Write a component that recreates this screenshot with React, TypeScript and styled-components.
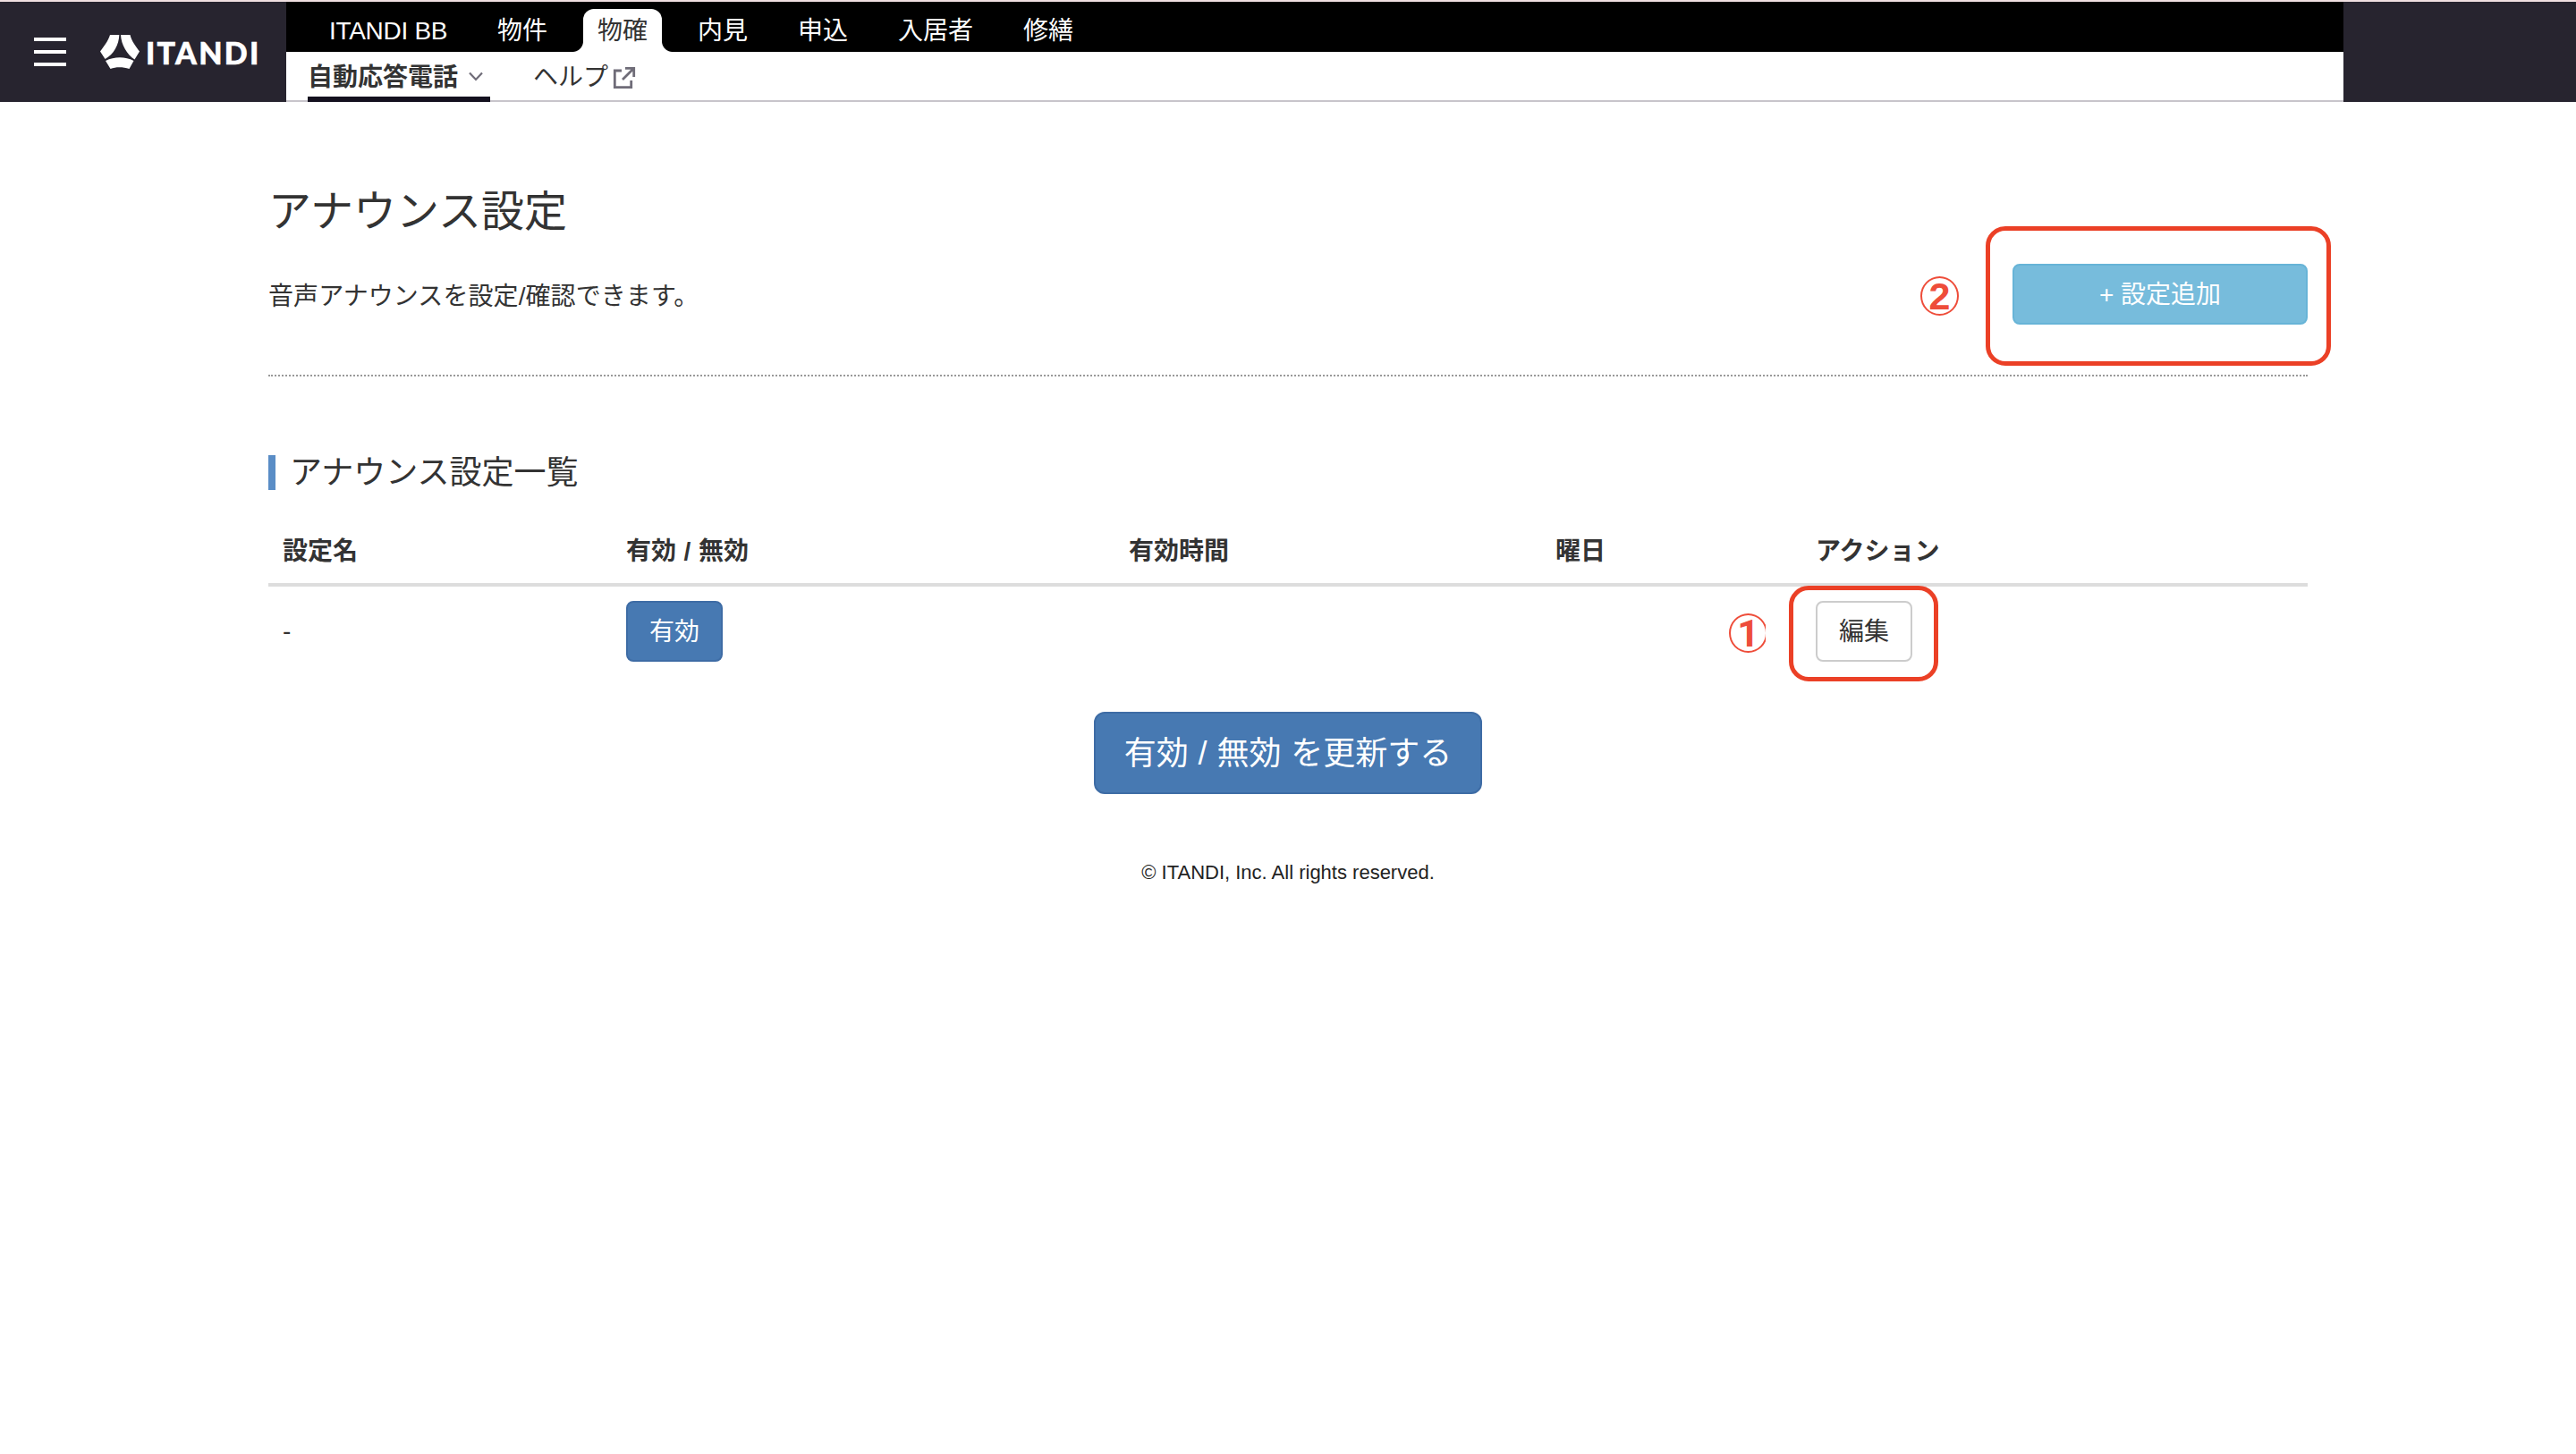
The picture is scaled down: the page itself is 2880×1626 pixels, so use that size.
import React from "react";
import styled, { createGlobalStyle } from "styled-components";

const fontStack = `"Liberation Sans", "Noto Sans CJK JP", sans-serif`;

const GlobalStyle = createGlobalStyle`
  *, *::before, *::after { box-sizing: border-box; }
  body {
    margin: 0;
    background: #fff;
    color: #333;
    font: 28px/40px ${fontStack};
  }
`;

const Page = styled.div`
  min-height: 1626px;
  border-top: 2px solid #f0dfe1;
`;

const Header = styled.header`
  display: flex;
  height: 112px;
  background: #27242f;
`;

const Brand = styled.div`
  display: flex;
  align-items: center;
  width: 320px;
  padding-left: 38px;
`;

const MenuButton = styled.button`
  display: flex;
  flex-direction: column;
  gap: 10px;
  width: 36px;
  margin: 0 38px 0 0;
  padding: 0;
  border: 0;
  background: none;
`;

const MenuBar = styled.span`
  height: 4px;
  background: #fff;
`;

const LogoMark = styled.svg`
  display: block;
  width: 44px;
  height: 38px;
`;

const LogoText = styled.span`
  margin: 1px 0 0 7px;
  color: #fff;
  font: 900 34px/40px Lato, sans-serif;
  letter-spacing: 2.3px;
  -webkit-text-stroke: 0.6px #fff;
`;

const Navigation = styled.div`
  display: flex;
  flex-direction: column;
  width: 2300px;
`;

const ProductNav = styled.nav`
  display: flex;
  align-items: flex-end;
  gap: 24px;
  height: 56px;
  padding-left: 32px;
  background: #000;
`;

const ProductTab = styled.a<{ $active?: boolean; $width: number }>`
  position: relative;
  width: ${(p) => p.$width}px;
  height: 48px;
  padding: 5px 0 0 16px;
  white-space: nowrap;
  border-radius: 12px 12px 0 0;
  color: ${(p) => (p.$active ? "#333" : "#fff")};
  background: ${(p) => (p.$active ? "#fff" : "transparent")};

  &::before,
  &::after {
    content: "";
    display: ${(p) => (p.$active ? "block" : "none")};
    position: absolute;
    bottom: 0;
    width: 12px;
    height: 12px;
  }
  &::before {
    left: -12px;
    background: radial-gradient(circle at 0 0, #000 11.5px, #fff 12.5px);
  }
  &::after {
    right: -12px;
    background: radial-gradient(circle at 100% 0, #000 11.5px, #fff 12.5px);
  }
`;

const LatinLabel = styled.span`
  letter-spacing: -0.3px;
`;

const SubNav = styled.nav`
  display: flex;
  gap: 48px;
  height: 56px;
  padding-left: 24px;
  background: #fff;
  box-shadow: inset 0 -2px 0 #c8c5cb;
`;

const SubNavItem = styled.a<{ $active?: boolean }>`
  display: flex;
  align-items: center;
  height: 56px;
  padding-top: 8px;
  padding-bottom: ${(p) => (p.$active ? 0 : 6)}px;
  font-weight: ${(p) => (p.$active ? 700 : 400)};
  border-bottom: ${(p) => (p.$active ? "6px solid #14111f" : "0")};
`;

const ChevronIcon = styled.svg`
  width: 16px;
  height: 12px;
  margin: 0 8px 2px 12px;
`;

const ExternalIcon = styled.svg`
  width: 26px;
  height: 26px;
  margin: 0 0 1px 5px;
`;

const Main = styled.main`
  width: 2280px;
  margin: 0 auto;
  padding-top: 90px;
`;

const PageTitle = styled.h1`
  margin: 0;
  font-size: 48px;
  font-weight: 400;
  line-height: 66px;
`;

const Intro = styled.section`
  display: flex;
  justify-content: space-between;
  align-items: center;
  height: 151px;
  padding-bottom: 31px;
  border-bottom: 2px dotted #999;
`;

const Lead = styled.p`
  margin: 0;
  padding-top: 5px;
  letter-spacing: 0.08px;
`;

const Button = styled.button<{ $kind: "info" | "primary" | "plain"; $width: number; $large?: boolean }>`
  display: flex;
  align-items: center;
  justify-content: center;
  width: ${(p) => p.$width}px;
  height: ${(p) => (p.$large ? 92 : 68)}px;
  padding: 1px 0 0;
  white-space: nowrap;
  font: ${(p) => (p.$large ? 36 : 28)}px/40px ${fontStack};
  word-spacing: ${(p) => (p.$large ? 0.8 : 0)}px;
  border-radius: ${(p) => (p.$large ? 12 : 8)}px;
  border: 2px solid
    ${(p) => ({ info: "#67b4d7", primary: "#3e6ca5", plain: "#ccc" })[p.$kind]};
  background: ${(p) => ({ info: "#77bcdc", primary: "#4779b2", plain: "#fff" })[p.$kind]};
  color: ${(p) => (p.$kind === "plain" ? "#333" : "#fff")};
`;

const Annotated = styled.div`
  position: relative;
`;

const Highlight = styled.span<{ $x: number; $y: number; $w: number; $h: number }>`
  position: absolute;
  left: ${(p) => p.$x}px;
  top: ${(p) => p.$y}px;
  width: ${(p) => p.$w}px;
  height: ${(p) => p.$h}px;
  border: 5px solid #eb4026;
  border-radius: 22px;
`;

const StepNumber = styled.span<{ $x: number; $y: number; $font: string; $cut?: number }>`
  position: absolute;
  left: ${(p) => p.$x}px;
  top: ${(p) => p.$y}px;
  display: flex;
  align-items: center;
  justify-content: center;
  width: 43px;
  height: 44px;
  border: 2px solid #ee4d3a;
  border-radius: 50%;
  clip-path: inset(0 ${(p) => p.$cut ?? 0}px 0 0);
  color: #ee4d3a;
  font: 700 43px/44px ${(p) => p.$font}, sans-serif;
`;

const SectionTitle = styled.h2`
  margin: 88px 0 0;
  padding-left: 16px;
  border-left: 8px solid #5a8dc6;
  font-size: 36px;
  font-weight: 400;
  line-height: 39px;
`;

const Table = styled.table`
  width: 2280px;
  margin-top: 28px;
  table-layout: fixed;
  border-collapse: separate;
  border-spacing: 0;
`;

const HeadCell = styled.th<{ $width: number }>`
  width: ${(p) => p.$width}px;
  height: 80px;
  padding: 5px 16px 0;
  text-align: left;
  word-spacing: 0.8px;
  border-bottom: 4px solid #ddd;
`;

const Cell = styled.td`
  height: 100px;
  padding: 16px;
  vertical-align: middle;
`;

const SubmitRow = styled.div`
  display: flex;
  justify-content: center;
  margin-top: 40px;
`;

const Footer = styled.footer`
  margin-top: 68px;
  color: #222;
  font-size: 22px;
  line-height: 40px;
  text-align: center;
`;

const products = [
  { label: <LatinLabel>ITANDI BB</LatinLabel>, width: 164 },
  { label: "物件", width: 88 },
  { label: "物確", width: 88, active: true },
  { label: "内見", width: 88 },
  { label: "申込", width: 88 },
  { label: "入居者", width: 116 },
  { label: "修繕", width: 88 },
];

const columns = [
  { label: "設定名", width: 384 },
  { label: "有効 / 無効", width: 562 },
  { label: "有効時間", width: 477 },
  { label: "曜日", width: 291 },
  { label: "アクション", width: 566 },
];

export default function App() {
  return (
    <Page>
      <GlobalStyle />
      <Header>
        <Brand>
          <MenuButton aria-label="メニュー">
            <MenuBar />
            <MenuBar />
            <MenuBar />
          </MenuButton>
          <LogoMark viewBox="0 0 44 38" fill="#fff">
            <path d="M11 0H21.300C21 11 15 22 5.500 27L0 18.500C4 13 9 7 11 0Z" />
            <path d="M23 0H33.500C35 7 40 13 44 18.500L38.500 27.500C30 22 23.500 11 23 0Z" />
            <path d="M6 29C16 24 28 24 37.500 29L32.500 38C26 36 18 35.500 11.500 38Z" />
          </LogoMark>
          <LogoText>ITANDI</LogoText>
        </Brand>
        <Navigation>
          <ProductNav>
            {products.map((p, i) => (
              <ProductTab key={i} $width={p.width} $active={p.active}>
                {p.label}
              </ProductTab>
            ))}
          </ProductNav>
          <SubNav>
            <SubNavItem $active>
              自動応答電話
              <ChevronIcon viewBox="0 0 16 12" fill="none" stroke="#6f6c78" strokeWidth="2.2">
                <path d="M1 1.500L8 9L15 1.500" />
              </ChevronIcon>
            </SubNavItem>
            <SubNavItem>
              ヘルプ
              <ExternalIcon viewBox="0 0 26 26" fill="none" stroke="#6f6c78" strokeWidth="2.800">
                <path d="M10 5H2.300V23.700H20.700V16M14 2.300H23.700V12M23.500 2.500L11 15" />
              </ExternalIcon>
            </SubNavItem>
          </SubNav>
        </Navigation>
      </Header>

      <Main>
        <PageTitle>アナウンス設定</PageTitle>
        <Intro>
          <Lead>音声アナウンスを設定/確認できます。</Lead>
          <Annotated>
            <Button $kind="info" $width={330}>+ 設定追加</Button>
            <Highlight $x={-30} $y={-42} $w={386} $h={156} />
            <StepNumber $x={-103} $y={14} $font={'"Liberation Sans"'}>2</StepNumber>
          </Annotated>
        </Intro>

        <SectionTitle>アナウンス設定一覧</SectionTitle>
        <Table>
          <thead>
            <tr>
              {columns.map((c) => (
                <HeadCell key={c.label} $width={c.width}>{c.label}</HeadCell>
              ))}
            </tr>
          </thead>
          <tbody>
            <tr>
              <Cell>-</Cell>
              <Cell><Button $kind="primary" $width={108}>有効</Button></Cell>
              <Cell />
              <Cell />
              <Cell>
                <Annotated>
                  <Button $kind="plain" $width={108}>編集</Button>
                  <Highlight $x={-30} $y={-17} $w={167} $h={107} />
                  <StepNumber $x={-97} $y={14} $font="Roboto" $cut={2}>1</StepNumber>
                </Annotated>
              </Cell>
            </tr>
          </tbody>
        </Table>
        <SubmitRow>
          <Button $kind="primary" $width={434} $large>有効 / 無効 を更新する</Button>
        </SubmitRow>
        <Footer>© ITANDI, Inc. All rights reserved.</Footer>
      </Main>
    </Page>
  );
}
